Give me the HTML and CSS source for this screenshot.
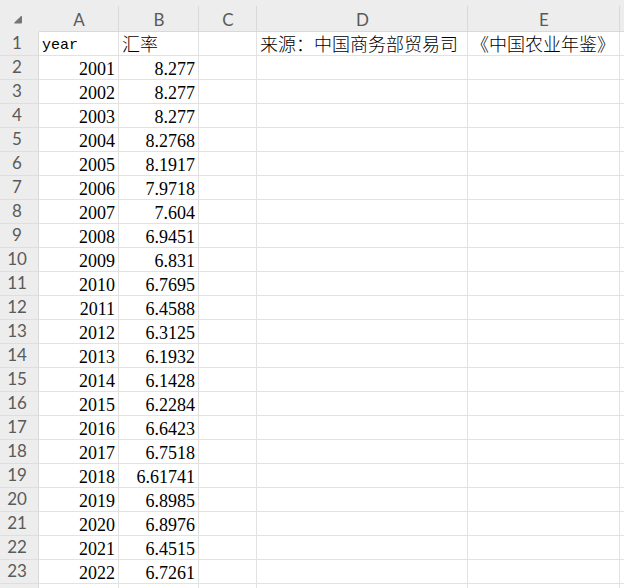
FILE: index.html
```
<!DOCTYPE html>
<html lang="zh-CN">
<head>
<meta charset="utf-8">
<title>汇率</title>
<link rel="stylesheet" href="styles.css">
</head>
<body>
<table class="sheet">
<colgroup><col class="col-index"><col class="col-a"><col class="col-b"><col class="col-c"><col class="col-d"><col class="col-e"><col></colgroup>
<thead>
<tr><th class="corner"><svg class="corner-mark" width="8" height="8" viewBox="0 0 8 8" aria-hidden="true"><path d="M8 0v6.500a1 1 0 0 1-1 1H.8a.6.6 0 0 1-.4-1L6.800.3z"/></svg></th><th scope="col">A</th><th scope="col">B</th><th scope="col">C</th><th scope="col">D</th><th scope="col">E</th><th></th></tr>
</thead>
<tbody>
<tr><th scope="row">1</th><td class="latin">year</td><td>汇率</td><td></td><td>来源：中国商务部贸易司</td><td>《中国农业年鉴》</td><td></td></tr>
<tr><th scope="row">2</th><td class="num">2001</td><td class="num">8.277</td><td></td><td></td><td></td><td></td></tr>
<tr><th scope="row">3</th><td class="num">2002</td><td class="num">8.277</td><td></td><td></td><td></td><td></td></tr>
<tr><th scope="row">4</th><td class="num">2003</td><td class="num">8.277</td><td></td><td></td><td></td><td></td></tr>
<tr><th scope="row">5</th><td class="num">2004</td><td class="num">8.2768</td><td></td><td></td><td></td><td></td></tr>
<tr><th scope="row">6</th><td class="num">2005</td><td class="num">8.1917</td><td></td><td></td><td></td><td></td></tr>
<tr><th scope="row">7</th><td class="num">2006</td><td class="num">7.9718</td><td></td><td></td><td></td><td></td></tr>
<tr><th scope="row">8</th><td class="num">2007</td><td class="num">7.604</td><td></td><td></td><td></td><td></td></tr>
<tr><th scope="row">9</th><td class="num">2008</td><td class="num">6.9451</td><td></td><td></td><td></td><td></td></tr>
<tr><th scope="row">10</th><td class="num">2009</td><td class="num">6.831</td><td></td><td></td><td></td><td></td></tr>
<tr><th scope="row">11</th><td class="num">2010</td><td class="num">6.7695</td><td></td><td></td><td></td><td></td></tr>
<tr><th scope="row">12</th><td class="num">2011</td><td class="num">6.4588</td><td></td><td></td><td></td><td></td></tr>
<tr><th scope="row">13</th><td class="num">2012</td><td class="num">6.3125</td><td></td><td></td><td></td><td></td></tr>
<tr><th scope="row">14</th><td class="num">2013</td><td class="num">6.1932</td><td></td><td></td><td></td><td></td></tr>
<tr><th scope="row">15</th><td class="num">2014</td><td class="num">6.1428</td><td></td><td></td><td></td><td></td></tr>
<tr><th scope="row">16</th><td class="num">2015</td><td class="num">6.2284</td><td></td><td></td><td></td><td></td></tr>
<tr><th scope="row">17</th><td class="num">2016</td><td class="num">6.6423</td><td></td><td></td><td></td><td></td></tr>
<tr><th scope="row">18</th><td class="num">2017</td><td class="num">6.7518</td><td></td><td></td><td></td><td></td></tr>
<tr><th scope="row">19</th><td class="num">2018</td><td class="num">6.61741</td><td></td><td></td><td></td><td></td></tr>
<tr><th scope="row">20</th><td class="num">2019</td><td class="num">6.8985</td><td></td><td></td><td></td><td></td></tr>
<tr><th scope="row">21</th><td class="num">2020</td><td class="num">6.8976</td><td></td><td></td><td></td><td></td></tr>
<tr><th scope="row">22</th><td class="num">2021</td><td class="num">6.4515</td><td></td><td></td><td></td><td></td></tr>
<tr><th scope="row">23</th><td class="num">2022</td><td class="num">6.7261</td><td></td><td></td><td></td><td></td></tr>
<tr class="tail"><th></th><td></td><td></td><td></td><td></td><td></td><td></td></tr>
</tbody>
</table>
</body>
</html>
```
FILE: styles.css
```
* { box-sizing: border-box; }

body {
  margin: 0;
  background: #fff;
  overflow: hidden;
}

.sheet {
  width: 100%;
  table-layout: fixed;
  border-collapse: separate;
  border-spacing: 0;
  color: #000;
  font-family: "Liberation Serif", "Noto Sans CJK SC", serif;
  font-size: 18px;
  font-weight: 300;
}

.col-index { width: 39px; }
.col-a, .col-b { width: 80px; }
.col-c { width: 58px; }
.col-d { width: 211px; }
.col-e { width: 152px; }

th {
  padding: 0;
  background: #ededed;
  color: #5a5a5a;
  font: 400 17px/22px Lato, sans-serif;
  text-align: center;
}

thead th {
  height: 32px;
  padding-top: 8px;
  border-bottom: 1px solid #d9d9d9;
  background-image: linear-gradient(#d9d9d9, #d9d9d9);
  background-repeat: no-repeat;
  background-position: right 6px;
  background-size: 1px 100%;
}

thead th:last-child { background-image: none; }

thead .corner {
  padding-right: 3px;
  padding-top: 4px;
  border-bottom-color: #ededed;
  background-image: none;
}

.corner-mark {
  display: inline-block;
  fill: #757575;
}

tbody th {
  height: 24px;
  padding: 0 4px 1px 0;
  border-right: 1px solid #d9d9d9;
  border-bottom: 1px solid #dedede;
}

td {
  height: 24px;
  padding: 3px 3px 0;
  border-right: 1px solid #e2e2e2;
  border-bottom: 1px solid #e2e2e2;
  line-height: 20px;
  white-space: nowrap;
}

td:last-child {
  padding: 0;
  border-right: 0;
}

.latin {
  padding-top: 5px;
  font-family: "Liberation Mono", monospace;
  font-size: 15px;
  line-height: 18px;
}

.num { text-align: right; }

.tail th, .tail td {
  height: 4px;
  padding: 0;
  border-bottom: 0;
}
```
